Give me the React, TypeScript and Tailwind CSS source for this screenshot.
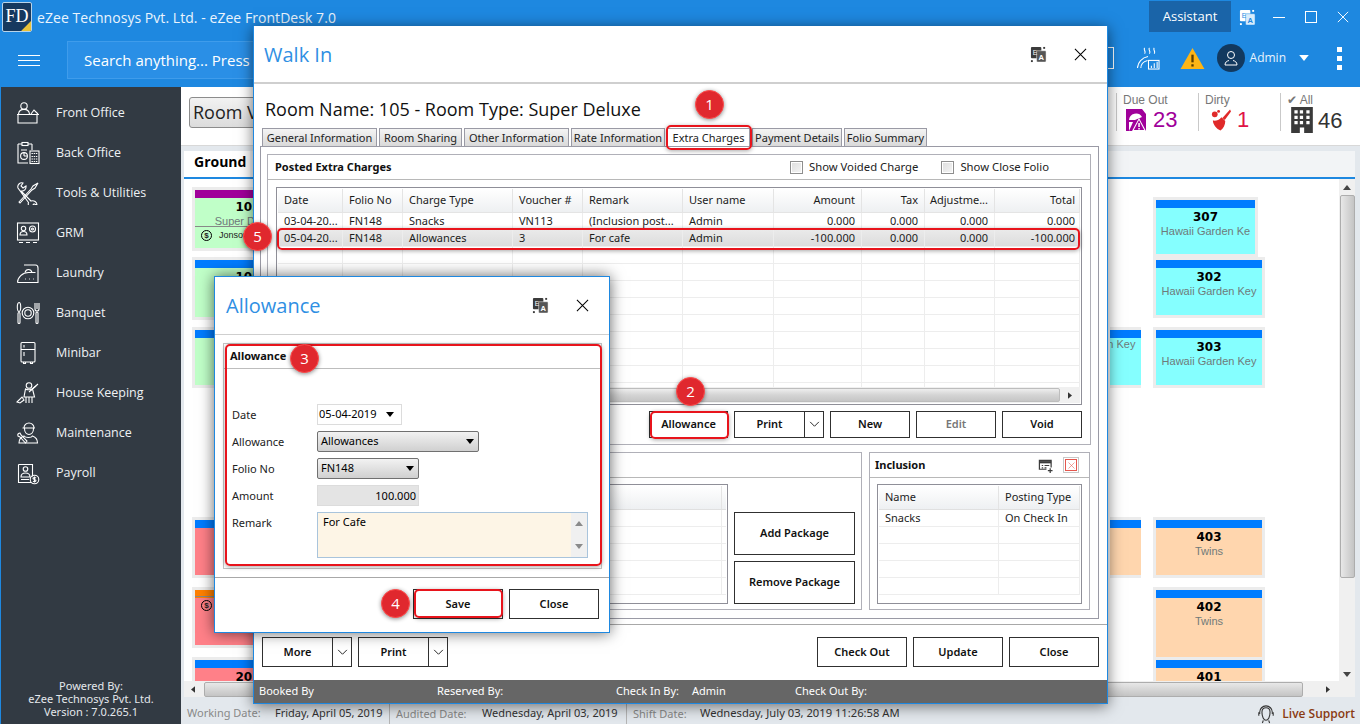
import React from 'react';

const UI = "font-['Open_Sans',sans-serif]";
const WIN = "font-['Noto_Sans',sans-serif]";

const Line = ({ children, className = '' }: { children: React.ReactNode; className?: string }) => (
  <svg viewBox="0 0 24 24" fill="none" stroke="currentColor" strokeWidth="1.1" className={className}>
    {children}
  </svg>
);

// sidebar icons, white line drawings
const navIcons: Record<string, React.ReactNode> = {
  front: (
    <>
      <circle cx="8" cy="5" r="3.2" />
      <path d="M2.5 13c.5-3.5 2.5-4.6 5.5-4.6s5 1.1 5.5 4.6M15 13l3-4 4 4" />
      <path d="M1 13.5h22M2 14v8h19v-8" />
    </>
  ),
  back: (
    <>
      <path d="M2 3h4M12 3h4M2 3v19h10M16 3v6" />
      <rect x="6" y="1.5" width="6" height="3" />
      <circle cx="8" cy="15" r="3.4" />
      <path d="M8 15V11.6M8 15h3.4M5 9h6" />
      <rect x="14" y="10" width="9" height="12.5" />
      <path d="M15.5 12.5h6M15.5 15.5h6M15.5 18h6M15.5 20.5h6" strokeDasharray="1.4 .8" />
    </>
  ),
  tools: (
    <>
      <path d="M3 21l12-13 2-3 5-3-3 5-3 2L4 22z" />
      <path d="M2 7c-1-3 2-6 5-5L5 5l2 2 3-2c.5 3-2 5.500-5 5l10 10c3-1 6 1 6 4l-3-1-2 2 1 2c-3 .5-5.500-2.500-4.500-5.500z" />
    </>
  ),
  grm: (
    <>
      <rect x="1.500" y="2" width="21" height="17" />
      <circle cx="7.500" cy="7.500" r="2.200" />
      <path d="M4 14c0-2.500 1.500-3.500 3.500-3.500S11 11.500 11 14z" />
      <circle cx="16.500" cy="8" r="3" />
      <circle cx="16.500" cy="8" r="1" />
      <path d="M3 21.500h4M10 21.500h4M17 21.500h4" />
    </>
  ),
  laundry: (
    <>
      <path d="M1.500 21.500c0-5 5-10 11-10h7M8 4h11.500c1.500 0 2.500 1 2.500 3v14.500H1.500" />
      <path d="M9 11.500c.5-2 2-3 3.500-3s3 1 3.500 3M9 18h.8M13 18h.8M17 18h.8" />
    </>
  ),
  banquet: (
    <>
      <ellipse cx="3" cy="6" rx="1.700" ry="4.500" />
      <rect x="2" y="11.500" width="2" height="11" rx="1" />
      <circle cx="12" cy="12" r="5.800" />
      <circle cx="12" cy="12" r="3.200" />
      <path d="M19 2v6c0 1.500 1 2 2 2s2-.5 2-2V2M21 2v6" />
      <rect x="20" y="11" width="2" height="11.500" rx="1" />
    </>
  ),
  minibar: (
    <>
      <rect x="5" y="1.500" width="14" height="19.500" rx="1" />
      <path d="M5 8.500h14M8 4v2.500M8 11v4M7.500 21v1.500h2V21M14.500 21v1.500h2V21" />
    </>
  ),
  house: (
    <>
      <circle cx="13" cy="4.500" r="2.800" />
      <path d="M9.500 8c1.500 1 5.500 1 7 0l2 8H8z" />
      <path d="M10 16v6M13 16v6M16 16v6M22 3l-9 8M1 21l5-5 2 3-4 3z" />
      <path d="M15 9l5-4" />
    </>
  ),
  maint: (
    <>
      <path d="M8 7a5 5 0 0 1 10 0zM6.500 7H19M8.500 7.500c0 8 9 8 9 0" />
      <path d="M8 15c-3 1-5 3-5 7h18.500c0-4-2-6-5-7-1 2-7 2-8.500 0z" />
      <path d="M2 15c-1-2 1-3 2-3l1 2 6 6-1.500 2L4 16z" />
    </>
  ),
  payroll: (
    <>
      <path d="M2.500 3.500h14v12M15 21.500H2.500v-18" />
      <circle cx="9.500" cy="8" r="2.300" />
      <path d="M5 16c0-2.500 1.500-4 4.500-4s4.500 1.500 4.500 4zM5 18.500h8" />
      <circle cx="18.500" cy="18.500" r="4.300" />
      <path d="M20 17c-1-1-3-.5-3 .6s3 .8 3 2-2 1.500-3 .6M18.500 15.500v6" />
    </>
  ),
};

const navItems = [
  ['Front Office', 'front'],
  ['Back Office', 'back'],
  ['Tools & Utilities', 'tools'],
  ['GRM', 'grm'],
  ['Laundry', 'laundry'],
  ['Banquet', 'banquet'],
  ['Minibar', 'minibar'],
  ['House Keeping', 'house'],
  ['Maintenance', 'maint'],
  ['Payroll', 'payroll'],
];

const TranslateIcon = ({ light = false }: { light?: boolean }) => {
  const back = light ? '#ffffff' : '#3b3b3b';
  const front = light ? '#d8ecfb' : '#555555';
  const ink = light ? '#1e88e0' : '#ffffff';
  return (
    <svg viewBox="0 0 18 18" className="w-[17px] h-[17px]">
      <rect x="1" y="1" width="11" height="12" rx="1" fill={back} />
      <rect x="7" y="5" width="10" height="12" rx="1" fill={front} stroke={ink} strokeWidth=".5" />
      <text x="3" y="9" fontSize="7" fill={ink} fontFamily="Liberation Sans">E</text>
      <text x="9" y="15" fontSize="8" fontWeight="700" fill={ink} fontFamily="Liberation Sans">A</text>
      <rect x="14" y="1" width="2" height="2" fill={back} />
      <rect x="1" y="15" width="2" height="2" fill={back} />
    </svg>
  );
};

const CloseX = ({ className = '' }: { className?: string }) => (
  <svg viewBox="0 0 14 14" className={className} stroke="currentColor" strokeWidth="1.100" fill="none">
    <path d="M1 1l12 12M13 1L1 13" />
  </svg>
);

const Chevron = () => (
  <svg viewBox="0 0 12 8" className="w-[11px] h-[7px]" fill="none" stroke="#222" strokeWidth="1.100">
    <path d="M1 1l5 5 5-5" />
  </svg>
);

const Caret = ({ className = '' }: { className?: string }) => (
  <svg viewBox="0 0 8 5" className={`w-[8px] h-[5px] ${className}`} fill="currentColor">
    <path d="M0 0h8L4 5z" />
  </svg>
);

const Btn = ({ label, className = '', dim = false }: { label: string; className?: string; dim?: boolean }) => (
  <button className={`border border-[#303030] bg-white flex items-center justify-center text-[11px] font-semibold ${dim ? 'text-[#777]' : 'text-[#111]'} ${className}`}>
    {label}
  </button>
);

const SplitBtn = ({ label, className = '' }: { label: string; className?: string }) => (
  <div className={`border border-[#303030] bg-white flex text-[11px] font-semibold text-[#111] ${className}`}>
    <div className="flex-1 flex items-center justify-center">{label}</div>
    <div className="w-[19px] border-l border-[#303030] flex items-center justify-center"><Chevron /></div>
  </div>
);

// ----- room board -----
type Room = { top: string; bg: string; num?: string; name?: string; guest?: string; w: string; h: string; mt: string };

const Card = ({ top, bg, num, name, guest, w, h, mt }: Room) => (
  <div className={`shrink-0 ${w} ${h} ${mt} ${bg} shadow-[0_0_0_3px_#ececec] flex flex-col overflow-hidden font-['Liberation_Sans',sans-serif]`}>
    <div className={`h-[8px] shrink-0 ${top}`} />
    {num && <div className="text-center text-[12px] font-bold font-['DejaVu_Sans',sans-serif] leading-[15px] mt-[2px] text-black">{num}</div>}
    {name && <div className="text-center text-[11px] leading-[13px] text-[#6f7a7a] whitespace-nowrap">{name}</div>}
    {guest && (
      <div className="-mt-[2px] border-t border-[#888] flex items-center gap-[7px] pl-[6px] pt-[2px] text-[9px] text-[#222]">
        <span className="w-[11px] h-[11px] rounded-full border border-black text-[8px] leading-[9px] text-center font-bold">$</span>
        {guest}
      </div>
    )}
  </div>
);

const colA: Room[] = [
  { top: 'bg-[#a0009a]', bg: 'bg-[#c0ffc8]', num: '105', name: 'Super Deluxe', guest: 'Jonson', w: 'w-[106px]', h: 'h-[58px]', mt: 'mt-[11px]' },
  { top: 'bg-[#007cff]', bg: 'bg-[#c0ffc8]', num: '106', w: 'w-[106px]', h: 'h-[57px]', mt: 'mt-[12px]' },
  { top: 'bg-[#007cff]', bg: 'bg-[#c0ffc8]', w: 'w-[106px]', h: 'h-[55px]', mt: 'mt-[13px]' },
  { top: 'bg-[#007cff]', bg: 'bg-[#ff8088]', w: 'w-[106px]', h: 'h-[55px]', mt: 'mt-[135px]' },
  { top: 'bg-[#ff8000]', bg: 'bg-[#ff8088]', guest: 'Robin', name: ' ', w: 'w-[106px]', h: 'h-[55px]', mt: 'mt-[15px]' },
  { top: 'bg-[#007cff]', bg: 'bg-[#ff8088]', num: '201', w: 'w-[106px]', h: 'h-[40px]', mt: 'mt-[15px]' },
];

const colB: Room[] = [
  { top: 'bg-[#007cff]', bg: 'bg-[#85ffff]', name: 'Hawaii Garden Key', w: 'w-[106px]', h: 'h-[55px]', mt: 'mt-[151px]' },
  { top: 'bg-[#007cff]', bg: 'bg-[#ffd6ae]', w: 'w-[106px]', h: 'h-[55px]', mt: 'mt-[135px]' },
];

const colC: Room[] = [
  { top: 'bg-[#007cff]', bg: 'bg-[#85ffff]', num: '307', name: 'Hawaii Garden Ke', w: 'w-[99px]', h: 'h-[54px]', mt: 'mt-[21px]' },
  { top: 'bg-[#007cff]', bg: 'bg-[#85ffff]', num: '302', name: 'Hawaii Garden Key', w: 'w-[106px]', h: 'h-[55px]', mt: 'mt-[6px]' },
  { top: 'bg-[#007cff]', bg: 'bg-[#85ffff]', num: '303', name: 'Hawaii Garden Key', w: 'w-[106px]', h: 'h-[55px]', mt: 'mt-[15px]' },
  { top: 'bg-[#007cff]', bg: 'bg-[#ffd6ae]', num: '403', name: 'Twins', w: 'w-[106px]', h: 'h-[55px]', mt: 'mt-[135px]' },
  { top: 'bg-[#007cff]', bg: 'bg-[#ffd6ae]', num: '402', name: 'Twins', w: 'w-[106px]', h: 'h-[70px]', mt: 'mt-[15px]' },
  { top: 'bg-[#007cff]', bg: 'bg-[#ffd6ae]', num: '401', w: 'w-[106px]', h: 'h-[30px]', mt: 'mt-0' },
];

const RoomBoard = () => (
  <div className="flex-1 relative min-h-0 overflow-hidden flex bg-white">
    <div className="flex flex-col pl-[11px]">{colA.map((r, i) => <Card key={i} {...r} />)}</div>
    <div className="flex flex-col ml-[809px] w-[31px] overflow-hidden">
      {colB.map((r, i) => <div key={i} className="flex justify-end"><Card {...r} /></div>)}
    </div>
    <div className="flex flex-col ml-[15px]">{colC.map((r, i) => <Card key={i} {...r} />)}</div>
  </div>
);

// ----- top grid -----
const chargeCols = 'grid-cols-[65px_60px_110px_70px_100px_91px_88px_63px_70px_1fr]';
const chargeHead = ['Date', 'Folio No', 'Charge Type', 'Voucher #', 'Remark', 'User name', 'Amount', 'Tax', 'Adjustme...', 'Total'];
const chargeRows = [
  ['03-04-20...', 'FN148', 'Snacks', 'VN113', '(Inclusion post...', 'Admin', '0.000', '0.000', '0.000', '0.000'],
  ['05-04-20...', 'FN148', 'Allowances', '3', 'For cafe', 'Admin', '-100.000', '0.000', '0.000', '-100.000'],
];

const ChargesGrid = () => (
  <div className="ml-[8px] mt-[7px] w-[806px] h-[218px] border border-[#8f8f98] p-px flex flex-col overflow-hidden text-[11px] text-[#1c1c1c]">
    <div className={`grid ${chargeCols} h-[23px] shrink-0 bg-gradient-to-b from-white to-[#eef0f2]`}>
      {chargeHead.map((h, i) => (
        <div key={h} className={`border-r border-[#e4e4e4] flex items-center pl-[6px] ${i === 9 ? 'pr-[4px]' : 'pr-[6px]'} ${i > 5 ? 'justify-end' : ''}`}>{h}</div>
      ))}
    </div>
    <div className="flex-1 overflow-hidden border-t border-[#e4e4e4]">
      {[...Array(11)].map((_, r) => (
        <div key={r} className={`grid ${chargeCols} h-[17px] border-b border-[#ededed] ${r === 1 ? 'bg-gradient-to-b from-[#eaeaea] to-[#dcdcdc]' : ''}`}>
          {chargeHead.map((_, c) => (
            <div key={c} className={`border-r border-[#ededed] flex items-center pl-[6px] ${c === 9 ? 'pr-[4px]' : 'pr-[6px]'} whitespace-nowrap ${c > 5 ? 'justify-end' : ''}`}>
              {chargeRows[r] ? chargeRows[r][c] : ''}
            </div>
          ))}
        </div>
      ))}
    </div>
    <div className="h-[16px] shrink-0 bg-[#f0f0f0] flex items-center">
      <div className="flex-1 h-[14px] rounded-[2px] bg-gradient-to-b from-[#eeeeee] via-[#d4d4d4] to-[#c6c6c6] border border-[#bdbdbd]" />
      <div className="w-[20px] flex justify-center text-[#333]">
        <svg viewBox="0 0 5 8" className="w-[4px] h-[7px]" fill="currentColor"><path d="M0 0l5 4-5 4z" /></svg>
      </div>
    </div>
  </div>
);

const SmallGrid = ({ cols, head, rows, className }: { cols: string; head: string[]; rows: string[][]; className: string }) => (
  <div className={`border border-[#8f8f98] p-px flex flex-col overflow-hidden text-[11px] text-[#1c1c1c] ${className}`}>
    <div className={`grid ${cols} h-[24px] shrink-0 bg-gradient-to-b from-white to-[#eef0f2] border-b border-[#e0e0e0]`}>
      {head.map((h, i) => <div key={i} className="border-r border-[#e4e4e4] flex items-center px-[6px] whitespace-nowrap">{h}</div>)}
    </div>
    {[...Array(5)].map((_, r) => (
      <div key={r} className={`grid ${cols} h-[17px] shrink-0 border-b border-[#ededed]`}>
        {head.map((_, c) => (
          <div key={c} className="border-r border-[#ededed] flex items-center px-[6px] whitespace-nowrap">{rows[r] ? rows[r][c] : ''}</div>
        ))}
      </div>
    ))}
  </div>
);

const tabs = [
  ['General Information', 'w-[115px]'],
  ['Room Sharing', 'w-[83px]'],
  ['Other Information', 'w-[105px]'],
  ['Rate Information', 'w-[94px]'],
  ['Extra Charges', 'w-[83px]'],
  ['Payment Details', 'w-[90px]'],
  ['Folio Summary', 'w-[83px]'],
];

const Check = ({ label }: { label: string }) => (
  <div className="flex items-center gap-[6px]">
    <span className="w-[13px] h-[13px] border border-[#8e8e8e] bg-gradient-to-br from-[#dedede] to-[#f5f5f5] shadow-[inset_0_0_0_1px_#fff]" />
    {label}
  </div>
);

const WalkIn = () => (
  <div className={`absolute left-[253px] top-[26px] w-[855px] h-[678px] bg-white border border-[#1e88e0] border-t-0 shadow-[0_2px_14px_rgba(0,0,0,0.55)] flex flex-col ${WIN}`}>
    <div className="h-[58px] shrink-0 border-b-2 border-[#cfcfcf] flex items-center pl-[10px] pr-[20px]">
      <span className={`text-[20px] pt-[1px] text-[#2f8fe3] flex-1 ${UI}`}>Walk In</span>
      <TranslateIcon />
      <CloseX className="w-[13px] h-[13px] ml-[27px] text-black" />
    </div>
    <div className={`h-[44px] shrink-0 pl-[11px] pt-[13px] text-[18px] leading-[25px] text-[#111] ${UI}`}>Room Name: 105 - Room Type: Super Deluxe</div>
    <div className="flex h-[18px] shrink-0 ml-[8px] gap-[2px] items-stretch">
      {tabs.map(([t, w], i) => (
        <div key={t} className={`${w} shrink-0 border border-b-0 border-[#9a9aa5] text-[11px] leading-[17px] text-center whitespace-nowrap text-[#222] ${i === 4 ? 'bg-white' : 'bg-gradient-to-b from-[#f4f4f4] to-[#d9d9d9]'}`}>{t}</div>
      ))}
    </div>
    <div className="ml-[6px] w-[839px] h-[473px] shrink-0 border border-[#9a9aa5] pl-[6px] pt-[7px] flex flex-col">
      <div className="w-[824px] h-[291px] shrink-0 border border-[#b0b0b8] flex flex-col">
        <div className="h-[25px] shrink-0 border-b border-[#b8b8b8] flex items-center pl-[7px] pr-[41px] text-[11px]">
          <span className="font-bold flex-1 text-[#111]">Posted Extra Charges</span>
          <div className="flex gap-[23px] text-[#222] text-[11.3px]">
            <Check label="Show Voided Charge" />
            <Check label="Show Close Folio" />
          </div>
        </div>
        <ChargesGrid />
        <div className="flex mt-[6px] ml-[381px] gap-[6px] h-[27px]">
          <Btn label="Allowance" className="w-[79px]" />
          <SplitBtn label="Print" className="w-[90px]" />
          <Btn label="New" className="w-[80px]" />
          <Btn label="Edit" dim className="w-[80px]" />
          <Btn label="Void" className="w-[80px]" />
        </div>
      </div>
      <div className="flex mt-[7px] gap-[7px]">
        <div className="w-[595px] h-[158px] border border-[#b0b0b8] flex flex-col">
          <div className="h-[25px] shrink-0 border-b border-[#b8b8b8]" />
          <div className="flex">
            <SmallGrid cols="grid-cols-[1fr_4px]" head={['', '']} rows={[]} className="ml-[8px] mt-[6px] w-[452px] h-[120px]" />
            <div className="ml-[6px] mt-[34px] flex flex-col gap-[6px]">
              <Btn label="Add Package" className="w-[121px] h-[43px]" />
              <Btn label="Remove Package" className="w-[121px] h-[43px]" />
            </div>
          </div>
        </div>
        <div className="w-[221px] h-[158px] border border-[#b0b0b8] flex flex-col">
          <div className="h-[25px] shrink-0 border-b border-[#b8b8b8] flex items-center pl-[5px] pr-[10px] text-[11px]">
            <span className="font-bold flex-1 text-[#111]">Inclusion</span>
            <svg viewBox="0 0 16 16" className="w-[15px] h-[15px] mr-[10px]" fill="none" stroke="#3c3c3c" strokeWidth="1.300">
              <path d="M14 10V2.500H1.500V12H9" />
              <path d="M1.500 4.500h12.500" strokeWidth="2.400" />
              <path d="M4 8h1.500M7 8h5M4 10.500h1.500M7 10.500h2M13 11v5M10.500 13.500h5" />
            </svg>
            <span className="w-[16px] h-[16px] border border-[#c8c8c8] flex items-center justify-center">
              <span className="w-[12px] h-[12px] border border-[#e4564d] flex items-center justify-center text-[#e4564d]"><CloseX className="w-[7px] h-[7px]" /></span>
            </span>
          </div>
          <SmallGrid cols="grid-cols-[120px_1fr]" head={['Name', 'Posting Type']} rows={[['Snacks', 'On Check In']]} className="ml-[7px] mt-[6px] w-[205px] h-[120px]" />
        </div>
      </div>
    </div>
    <div className="mt-[5px] border-t border-[#a8a8a8] flex flex-1 pt-[12px] pl-[8px]">
      <SplitBtn label="More" className="w-[90px] h-[30px]" />
      <SplitBtn label="Print" className="w-[90px] h-[30px] ml-[6px]" />
      <Btn label="Check Out" className="w-[90px] h-[30px] ml-[369px]" />
      <Btn label="Update" className="w-[90px] h-[30px] ml-[6px]" />
      <Btn label="Close" className="w-[90px] h-[30px] ml-[6px]" />
    </div>
    <div className="h-[23px] shrink-0 bg-[#666] flex items-center text-[11px] text-white pl-[5px]">
      <span className="w-[178px]">Booked By</span>
      <span className="w-[179px]">Reserved By:</span>
      <span className="w-[76px]">Check In By:</span>
      <span className="w-[103px]">Admin</span>
      <span>Check Out By:</span>
    </div>
  </div>
);

const Field = ({ label, children, className = '' }: { label: string; children: React.ReactNode; className?: string }) => (
  <div className={`flex ${className}`}>
    <span className="w-[85px] shrink-0 text-[#222] leading-[21px]">{label}</span>
    {children}
  </div>
);

const Select = ({ value, className }: { value: string; className: string }) => (
  <div className={`h-[21px] border border-[#707070] rounded-[2px] bg-gradient-to-b from-[#f2f2f2] to-[#d0d0d0] flex items-center pl-[3px] pr-[4px] ${className}`}>
    <span className="flex-1">{value}</span>
    <Caret className="text-black" />
  </div>
);

const AllowanceWin = () => (
  <div className={`absolute left-[214px] top-[276px] w-[396px] h-[357px] bg-white border border-[#1e88e0] shadow-[0_0_14px_rgba(0,0,0,0.6)] flex flex-col ${WIN}`}>
    <div className="h-[58px] shrink-0 border-b border-[#cfcfcf] flex items-center pl-[11px] pr-[20px]">
      <span className={`text-[20px] text-[#2f8fe3] flex-1 ${UI}`}>Allowance</span>
      <TranslateIcon />
      <CloseX className="w-[13px] h-[13px] ml-[27px] text-black" />
    </div>
    <div className="ml-[8px] mt-[8px] w-[379px] h-[226px] shrink-0 border border-[#c4c4c4] text-[11px] flex flex-col">
      <div className="h-[25px] shrink-0 border-b border-[#bdbdbd] pl-[6px] leading-[24px] font-bold text-[#111]">Allowance</div>
      <div className="pl-[8px] pt-[35px] flex flex-col gap-[6px]">
        <Field label="Date">
          <div className="w-[85px] h-[21px] border border-[#dcdcdc] flex items-center pl-[1px] pr-[7px]">
            <span className="flex-1">05-04-2019</span><Caret className="text-black" />
          </div>
        </Field>
        <Field label="Allowance"><Select value="Allowances" className="w-[162px]" /></Field>
        <Field label="Folio No"><Select value="FN148" className="w-[102px]" /></Field>
        <Field label="Amount">
          <div className="w-[102px] h-[21px] border border-[#dcdcdc] bg-[#e4e4e4] text-right pr-[2px] leading-[19px]">100.000</div>
        </Field>
        <Field label="Remark">
          <div className="w-[271px] h-[46px] border border-[#a9c4dc] bg-[#fdf5e6] flex pl-[5px] leading-[18px]">
            <span className="flex-1">For Cafe</span>
            <div className="w-[16px] bg-[#f0f0f0] flex flex-col justify-between items-center py-[8px]">
              <Caret className="rotate-180 text-[#8a8a8a]" />
              <Caret className="text-[#8a8a8a]" />
            </div>
          </div>
        </Field>
      </div>
    </div>
    <div className="mt-[8px] border-t border-[#a8a8a8] flex justify-end gap-[6px] pt-[11px] pr-[10px]">
      <Btn label="Save" className="w-[90px] h-[30px]" />
      <Btn label="Close" className="w-[90px] h-[30px]" />
    </div>
  </div>
);

// numbered red markers and outlines sit over the screenshot
const Badge = ({ n, className }: { n: number; className: string }) => (
  <div className={`absolute w-[29px] h-[29px] rounded-full bg-[#e0282e] border border-[#ff4a4a] shadow-[0_1px_4px_rgba(0,0,0,0.45)] flex items-center justify-center text-white text-[15px] font-['Open_Sans',sans-serif] ${className}`}>{n}</div>
);

const Outline = ({ className }: { className: string }) => (
  <div className={`absolute border-2 border-[#e8141c] rounded-[5px] shadow-[0_1px_4px_rgba(0,0,0,0.35)] ${className}`} />
);

const Stat = ({ label, value, color, icon, w }: { label: React.ReactNode; value: string; color: string; icon: React.ReactNode; w: string }) => (
  <div className={`${w} h-[38px] border-l border-[#c9c9c9] pl-[6px] pt-[1px] font-['Liberation_Sans',sans-serif]`}>
    <div className="text-[12px] leading-[13px] text-[#777]">{label}</div>
    <div className={`flex items-center text-[22px] leading-[25px] ${color}`}>
      {icon}
      {value}
    </div>
  </div>
);

export default function App() {
  return (
    <div className={`relative w-[1360px] h-[724px] overflow-hidden bg-[#e3e8ed] flex flex-col ${UI}`}>
      {/* header */}
      <header className="h-[87px] shrink-0 bg-[#1e88e0] text-white flex flex-col">
        <div className="h-[33px] shrink-0 flex items-start">
          <div className="ml-[2px] mt-[2px] w-[30px] h-[30px] rounded-[2px] bg-[#16395f] border border-[#b8d4ea] relative overflow-hidden font-['Liberation_Serif',serif] text-[18px] leading-[26px] text-center text-white">
            FD
            <div className="absolute right-[-7px] bottom-[-7px] w-[14px] h-[14px] rotate-45 bg-[#e8c23a]" />
          </div>
          <span className="ml-[5px] mt-[8px] text-[14px] leading-[20px] flex-1 text-[#eaf4fd] tracking-[0.05px]">eZee Technosys Pvt. Ltd. - eZee FrontDesk 7.0</span>
          <div className="mt-[1px] w-[82px] h-[31px] bg-[#1a64a8] flex items-center justify-center text-[13px] font-medium">Assistant</div>
          <div className="mt-[9px] ml-[8px]"><TranslateIcon light /></div>
          <div className="mt-[17px] ml-[17px] w-[12px] h-px bg-white" />
          <div className="mt-[11px] ml-[20px] w-[12px] h-[12px] border border-white" />
          <CloseX className="mt-[11px] ml-[20px] mr-[11px] w-[12px] h-[12px] text-white" />
        </div>
        <div className="flex items-center h-[54px]">
          <div className="ml-[18px] w-[22px] flex flex-col gap-[4px]">
            <span className="h-px bg-white" /><span className="h-px bg-white" /><span className="h-px bg-white" />
          </div>
          <div className="ml-[27px] w-[200px] h-[38px] bg-[#2a8fe6] border border-[#3f9ceb] flex items-center pl-[16px] text-[15px] whitespace-nowrap overflow-hidden">Search anything... Press</div>
          <div className="flex-1" />
          <div className="flex items-center mb-[4px]">
            <div className="w-[20px] h-[22px] border border-white mr-[23px]" />
            <svg viewBox="0 0 24 24" className="w-[23px] h-[23px] mr-[20px]" fill="none" stroke="#fff" strokeWidth="1.100">
              <path d="M8 1c-2 2 2 3 0 6M13 1c-2 2 2 3 0 6M18 1c-2 2 2 3 0 6" />
              <path d="M.5 22c0-6 5-11 11-12M4 22c0-4 3-7 7-8" />
              <rect x="12" y="14" width="11" height="9" />
              <path d="M15 22v-2.500M18 22v-5M21 22v-6.500" />
            </svg>
            <svg viewBox="0 0 26 24" className="w-[25px] h-[23px]">
              <path d="M13 1l12.500 22H.5z" fill="#fdb515" />
              <rect x="11.800" y="8" width="2.400" height="8" fill="#5a3d00" />
              <rect x="11.800" y="18" width="2.400" height="2.400" fill="#5a3d00" />
            </svg>
            <div className="ml-[12px] w-[28px] h-[28px] rounded-full bg-[#12395f] flex items-center justify-center">
              <svg viewBox="0 0 16 16" className="w-[16px] h-[16px]" fill="none" stroke="#fff" strokeWidth="1"><circle cx="8" cy="5" r="3.500" /><path d="M2 15c0-3 2-4 4-4.500M14 15c0-3-2-4-4-4.500M2 15h12" /></svg>
            </div>
            <span className="ml-[5px] text-[12px] text-[#e8f3fc]">Admin</span>
            <Caret className="ml-[13px] !w-[10px] !h-[6px] text-white" />
            <div className="ml-[28px] mr-[18px] flex flex-col gap-[4px]">
              <span className="w-[5px] h-[5px] bg-white" /><span className="w-[5px] h-[5px] bg-white" /><span className="w-[5px] h-[5px] bg-white" />
            </div>
          </div>
        </div>
      </header>

      <div className="flex-1 flex min-h-0">
        {/* sidebar */}
        <aside className="w-[181px] shrink-0 bg-[#323a43] border-l border-[#1e88e0] flex flex-col text-[#eef1f4] text-[12.500px]">
          <nav className="pt-[6px] flex flex-col">
            {navItems.map(([label, key]) => (
              <div key={key} className="h-[40px] flex items-center pl-[15px]">
                <Line className="w-[24px] h-[24px] shrink-0 text-white">{navIcons[key]}</Line>
                <span className="ml-[16px]">{label}</span>
              </div>
            ))}
          </nav>
          <div className={`mt-auto pb-[6px] text-center text-[11px] leading-[13px] text-[#e4e8ec] ${WIN}`}>
            <div>Powered By:</div>
            <div>eZee Technosys Pvt. Ltd.</div>
            <div>Version : 7.0.265.1</div>
          </div>
        </aside>

        {/* main content */}
        <main className="flex-1 flex flex-col min-w-0">
          <div className="h-[59px] shrink-0 bg-white border-b border-[#d8d8d8] flex items-start">
            <div className="ml-[8px] mt-[10px] w-[100px] h-[31px] border border-[#8c8c8c] rounded-[3px] bg-gradient-to-b from-[#f2f2f2] to-[#dcdcdc] text-[18px] leading-[29px] pl-[3px] text-[#222] overflow-hidden whitespace-nowrap">Room View</div>
            <div className="flex-1" />
            <div className="flex mt-[6px] mr-[6px]">
              <Stat w="w-[82px]" label="Due Out" value="23" color="text-[#a0009a] gap-[7px]" icon={
                <svg viewBox="0 0 20 24" className="w-[20px] h-[24px] ml-[3px]">
                  <path d="M0 1h16l4 5v17H0z" fill="#a0009a" />
                  <path d="M3 12a7 7 0 0 1 13-3L9 12z" fill="#fff" />
                  <path d="M3 14h4l-4 9z" fill="#fff" />
                  <path d="M13 10l7 13H6z" fill="#fff" />
                  <path d="M13 12l5.200 10H7.800z" fill="#a0009a" />
                  <rect x="12.300" y="15" width="1.500" height="4" fill="#fff" />
                  <rect x="12.300" y="20" width="1.500" height="1.500" fill="#fff" />
                </svg>
              } />
              <Stat w="w-[82px]" label="Dirty" value="1" color="text-[#e01446] gap-[6px]" icon={
                <svg viewBox="0 0 22 24" className="w-[21px] h-[24px] ml-[5px]" fill="#e02a2a">
                  <path d="M21 1l-8 9 2.500 2L22 3zM12 9c-3 3.500-6 4-9 3.500 0 4 4 9 8 10.500 3-2 5-6 5-10z" />
                  <circle cx="5" cy="6" r="3" />
                  <circle cx="9" cy="3" r="1.500" />
                </svg>
              } />
              <Stat w="w-[74px]" label={<>✔ All</>} value="46" color="text-[#333] gap-[5px]" icon={
                <svg viewBox="0 0 20 24" className="w-[22px] h-[26px] ml-[4px]"><rect width="20" height="24" fill="#3a3a3a" /><path d="M3 3h3v3H3zM8 3h3v3H8zM14 3h3v3h-3zM3 8h3v3H3zM8 8h3v3H8zM14 8h3v3h-3zM3 13h3v3H3zM8 13h3v3H8zM14 13h3v3h-3zM8 19h4v5H8z" fill="#fff" /></svg>
              } />
            </div>
          </div>

          <div className="h-[5px] shrink-0" />
          <div className="flex-1 flex flex-col min-h-0 ml-[3px] mr-[5px]">
            <div className="h-[28px] shrink-0 bg-[#f2f4f6] flex">
              <div className="w-[66px] bg-white border-b-2 border-[#1e88e0] text-[14px] font-bold pl-[10px] leading-[22px] text-black overflow-hidden">Ground</div>
              <div className="flex-1 border-b-2 border-[#1e88e0]" />
            </div>
            <div className="flex-1 flex min-h-0">
              <RoomBoard />
              <div className="w-[16px] shrink-0 bg-[#f0f0f0] flex flex-col items-center pt-[6px] pb-[4px]">
                <Caret className="rotate-180 text-[#444]" />
                <div className="mt-[5px] w-[15px] h-[383px] rounded-[2px] border border-[#adadad] bg-gradient-to-r from-[#e8e8e8] to-[#c4c4c4]" />
                <div className="flex-1" />
                <Caret className="text-[#444]" />
              </div>
            </div>
            <div className="h-[16px] shrink-0 bg-[#f0f0f0] flex items-center">
              <svg viewBox="0 0 5 8" className="w-[4px] h-[7px] ml-[7px] mr-[9px] text-[#333]" fill="currentColor"><path d="M5 0L0 4l5 4z" /></svg>
              <div className="w-[1099px] h-[15px] rounded-[2px] border border-[#adadad] bg-gradient-to-b from-[#e8e8e8] to-[#c4c4c4]" />
              <svg viewBox="0 0 5 8" className="w-[4px] h-[7px] ml-[23px] text-[#333]" fill="currentColor"><path d="M0 0l5 4-5 4z" /></svg>
            </div>
          </div>

          {/* status bar */}
          <footer className={`h-[27px] shrink-0 flex items-center text-[11px] text-[#333] pl-[6px] pt-[6px] whitespace-nowrap ${WIN}`}>
            <span className="w-[88px] text-[#888]">Working Date:</span>
            <span className="w-[114px]">Friday, April 05, 2019</span>
            <span className="h-[22px] border-l border-[#b5b5b5] pl-[6px] leading-[22px] w-[93px] text-[#888]">Audited Date:</span>
            <span className="w-[144px]">Wednesday, April 03, 2019</span>
            <span className="h-[22px] border-l border-[#b5b5b5] pl-[6px] leading-[22px] w-[74px] text-[#888]">Shift Date:</span>
            <span className="text-[11.2px]">Wednesday, July 03, 2019 11:26:58 AM</span>
            <div className="flex-1" />
            <svg viewBox="0 0 20 22" className="w-[18px] h-[20px]" fill="none" stroke="#333" strokeWidth="1.200">
              <path d="M3 11V9a7 7 0 0 1 14 0v2" /><path d="M5.500 9c0-3 2-5 4.500-5s4.500 2 4.500 5c0 5-2 9-4.500 9s-4.500-4-4.500-9z" /><path d="M2 9v4M18 9v4M7 18l-1 3M13 18l1 3" />
            </svg>
            <span className={`ml-[7px] mr-[5px] text-[12px] font-semibold text-[#8a3b12] ${UI}`}>Live Support</span>
          </footer>
        </main>
      </div>

      <WalkIn />
      <AllowanceWin />

      <Outline className="left-[666px] top-[125px] w-[86px] h-[25px]" />
      <Outline className="left-[650px] top-[411px] w-[79px] h-[28px]" />
      <Outline className="left-[225px] top-[344px] w-[377px] h-[222px]" />
      <Outline className="left-[414px] top-[589px] w-[89px] h-[29px]" />
      <Outline className="left-[277px] top-[228px] w-[803px] h-[22px]" />
      <Badge n={1} className="left-[695px] top-[90px]" />
      <Badge n={2} className="left-[676px] top-[377px]" />
      <Badge n={3} className="left-[290px] top-[344px]" />
      <Badge n={4} className="left-[381px] top-[589px]" />
      <Badge n={5} className="left-[243px] top-[222px]" />
    </div>
  );
}
